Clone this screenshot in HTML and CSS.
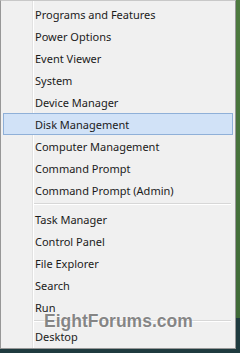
FILE: index.html
```html
<!DOCTYPE html>
<html lang="en">
  <head>
    <meta charset="UTF-8" />
    <title>Quick Link Menu</title>
    <link rel="stylesheet" href="styles.css">
  </head>
  <body>
    <div class="menu">
      <ul class="group">
        <li class="item">Programs and Features</li>
        <li class="item">Power Options</li>
        <li class="item">Event Viewer</li>
        <li class="item">System</li>
        <li class="item">Device Manager</li>
        <li class="item active">Disk Management</li>
        <li class="item">Computer Management</li>
        <li class="item">Command Prompt</li>
        <li class="item">Command Prompt (Admin)</li>
      </ul>
      <div class="separator"></div>
      <ul class="group">
        <li class="item">Task Manager</li>
        <li class="item">Control Panel</li>
        <li class="item">File Explorer</li>
        <li class="item">Search</li>
        <li class="item">Run</li>
      </ul>
      <div class="separator"></div>
      <ul class="group">
        <li class="item">Desktop</li>
      </ul>
      <div class="watermark">EightForums.com</div>
    </div>
  </body>
</html>
```

FILE: styles.css
```css
body {
  margin: 0;
  height: 353px;
  background: linear-gradient(#4d7a3f, #3f6a38 90%, #1f3b3f 90%);
  font-family: "Noto Sans", "Open Sans", sans-serif;
  font-size: 11px;
  color: #1b1b1b;
}
.menu {
  position: relative;
  width: 234px;
  padding: 2px 0 1px 0;
  background: #f0f0f0 linear-gradient(to right, transparent 31px, #e2e2e2 31px, #e2e2e2 32px, #ffffff 32px, #ffffff 33px, transparent 33px);
  border: 1px solid #979797;
  border-top-color: #c8c8c8;
}
.group {
  list-style: none;
  margin: 0;
  padding: 0;
}
.item {
  height: 22px;
  line-height: 21px;
  padding-left: 31px;
  margin: 0 2px;
  border: 1px solid transparent;
  box-sizing: border-box;
  white-space: nowrap;
}
.item.active {
  background-color: #d1e2f7;
  border-color: #8fb0d8;
}
.separator {
  height: 1px;
  margin: 2px 4px 3px 33px;
  background-color: #d7d7d7;
  border-bottom: 1px solid #ffffff;
}
.watermark {
  position: absolute;
  left: 43px;
  top: 310px;
  font-family: "Liberation Sans", sans-serif;
  font-weight: bold;
  font-size: 17.5px;
  color: rgba(112, 112, 112, 0.85);
  text-shadow: 0 0 2px #ffffff;
}
```
